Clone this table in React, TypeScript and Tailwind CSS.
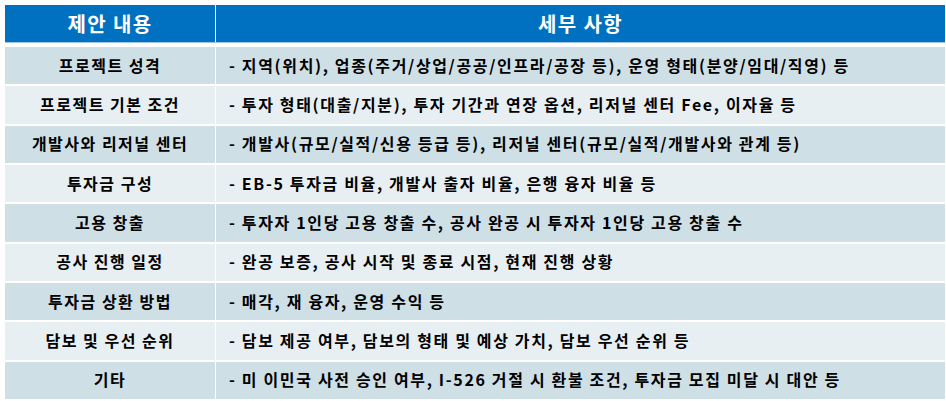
import React from "react";

const rows: [string, string][] = [
  ["프로젝트 성격", "- 지역(위치), 업종(주거/상업/공공/인프라/공장 등), 운영 형태(분양/임대/직영) 등"],
  ["프로젝트 기본 조건", "- 투자 형태(대출/지분), 투자 기간과 연장 옵션, 리저널 센터 Fee, 이자율 등"],
  ["개발사와 리저널 센터", "- 개발사(규모/실적/신용 등급 등), 리저널 센터(규모/실적/개발사와 관계 등)"],
  ["투자금 구성", "- EB-5 투자금 비율, 개발사 출자 비율, 은행 융자 비율 등"],
  ["고용 창출", "- 투자자 1인당 고용 창출 수, 공사 완공 시 투자자 1인당 고용 창출 수"],
  ["공사 진행 일정", "- 완공 보증, 공사 시작 및 종료 시점, 현재 진행 상황"],
  ["투자금 상환 방법", "- 매각, 재 융자, 운영 수익 등"],
  ["담보 및 우선 순위", "- 담보 제공 여부, 담보의 형태 및 예상 가치, 담보 우선 순위 등"],
  ["기타", "- 미 이민국 사전 승인 여부, I-526 거절 시 환불 조건, 투자금 모집 미달 시 대안 등"],
];

export default function App() {
  return (
    <div
      className="w-[946px] h-[401px] bg-white pt-[5px] pl-[5px] pr-[1px] text-black"
      style={{ fontFamily: '"Noto Sans CJK KR", "Noto Sans", sans-serif' }}
    >
      <div className="flex flex-col w-[940px]">
        <div className="flex h-[37px] gap-[1px] bg-white">
          <div className="w-[210px] bg-[#0070c0] text-white font-bold text-[20px] tracking-[1.4px] flex items-center justify-center">
            제안 내용
          </div>
          <div className="flex-1 bg-[#0070c0] text-white font-bold text-[20px] tracking-[1.4px] flex items-center justify-center">
            세부 사항
          </div>
        </div>
        <div className="h-[1px] bg-[#9fc3e3]" />
        <div className="h-[4px]" />
        <div className="flex flex-col gap-[2px] h-[352px]">
          {rows.map(([a, b], i) => (
            <div key={i} className="flex flex-1 gap-[1px]">
              <div
                className={`w-[210px] flex items-center justify-center pb-[2px] font-bold text-[16px] tracking-[1.5px] ${
                  i % 2 === 0 ? "bg-[#cfdfe6]" : "bg-[#e8eff2]"
                }`}
              >
                {a}
              </div>
              <div
                className={`flex-1 flex items-center pl-[13px] pb-[2px] font-bold text-[16px] tracking-[1.65px] whitespace-nowrap ${
                  i % 2 === 0 ? "bg-[#cfdfe6]" : "bg-[#e8eff2]"
                }`}
              >
                {b}
              </div>
            </div>
          ))}
        </div>
      </div>
    </div>
  );
}
